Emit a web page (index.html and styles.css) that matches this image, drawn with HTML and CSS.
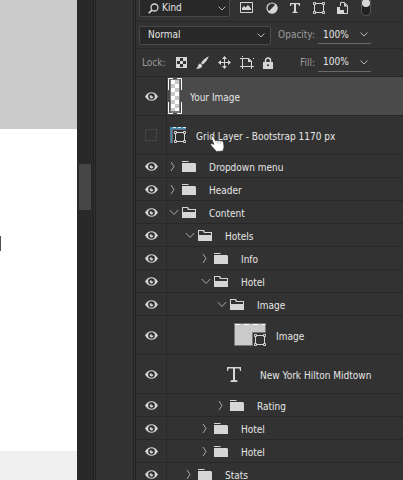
FILE: index.html
```html
<!DOCTYPE html>
<html lang="en">
<head>
<meta charset="utf-8">
<title>Layers</title>
<link rel="stylesheet" href="styles.css">
</head>
<body>
<svg class="defs" aria-hidden="true">
  <symbol id="eye" viewBox="0 0 13 9"><path d="M0 4.500C3-1.200 10-1.200 13 4.500 10 10.200 3 10.200 0 4.500Z" fill="#d6d6d6"/><circle cx="6.500" cy="4.500" r="3.300" fill="#303030"/><circle cx="6.500" cy="4.700" r="1.800" fill="#d6d6d6"/><circle cx="7.300" cy="3.700" r=".9" fill="#303030"/></symbol>
  <symbol id="closed" viewBox="0 0 10 11"><path d="M2 1l3 4.500L2 10" fill="none" stroke="#a8a8a8"/></symbol>
  <symbol id="opened" viewBox="0 0 10 11"><path d="M.8 3l4.200 4.500L9.200 3" fill="none" stroke="#a8a8a8"/></symbol>
  <symbol id="folder" viewBox="0 0 14 11"><path d="M0 0h6l1 1H0zM0 2h13l1 1v8H0z" fill="#d6d6d6"/></symbol>
  <symbol id="folder-open" viewBox="0 0 14 11"><path d="M0 0h6l1 2h7v9H0zM1 1v4h12V3H6L5 1z" fill="#d6d6d6" fill-rule="evenodd"/></symbol>
  <symbol id="chevron" viewBox="0 0 8 5"><path d="M.5.500L4 4 7.500.500" fill="none" stroke="#b4b4b4"/></symbol>
  <symbol id="shape" viewBox="0 0 12 12"><path d="M1.500 3v6M10.500 3v6M3 1.500h6M3 10.500h6" stroke="#d6d6d6"/><path d="M.5.500h2v2h-2zM9.500.500h2v2h-2zM.5 9.500h2v2h-2zM9.500 9.500h2v2h-2z" fill="#303030" stroke="#d6d6d6"/></symbol>
</svg>
<div class="app">
  <section class="canvas" aria-label="Document">
    <div class="hero"></div>
    <div class="page"><i class="mark"></i></div>
    <div class="foot"></div>
  </section>
  <div class="track"><div class="thumb"></div></div>
  <div class="dock"></div>
  <main class="panel">
    <div class="bar filters">
      <div class="picker kind">
        <svg class="search" width="11" height="11" viewBox="0 0 11 11"><circle cx="6.500" cy="4.500" r="3.500" fill="none" stroke="#d6d6d6" stroke-width="1.300"/><path d="M4 7L.8 10.200" stroke="#d6d6d6" stroke-width="1.700"/></svg>
        <select aria-label="Filter type"><option>Kind</option></select>
        <svg class="chev" width="8" height="5"><use href="#chevron"/></svg>
      </div>
      <div class="types">
        <button aria-label="Pixel layers"><svg width="13" height="11" viewBox="0 0 13 11"><path d="M.5.500h12v10H.5z" fill="none" stroke="#d6d6d6"/><path d="M2 8V6l2-2 1.500 1.500L8 3l3 3.500V8z" fill="#d6d6d6"/></svg></button>
        <button aria-label="Adjustment layers"><svg width="12" height="12" viewBox="0 0 12 12"><circle cx="6" cy="6" r="5" fill="none" stroke="#d6d6d6" stroke-width="1.200"/><path d="M9.900 2.100A5.500 5.500 0 0 1 2.100 9.900z" fill="#d6d6d6"/></svg></button>
        <button aria-label="Type layers"><svg width="10" height="10" viewBox="0 0 10 10"><path d="M0 0h10v3H9L8.500 1.300H6V8.500L7.500 9v1h-5V9L4 8.500V1.300H1.500L1 3H0z" fill="#d6d6d6"/></svg></button>
        <button aria-label="Shape layers"><svg width="12" height="12"><use href="#shape"/></svg></button>
        <button aria-label="Smart objects"><svg width="11" height="12" viewBox="0 0 11 12"><path d="M3.500 4V.5h4l3 3v8H7" fill="none" stroke="#d6d6d6"/><path d="M7 .5v4h3.500zM0 5h3v3h4v4H0z" fill="#d6d6d6"/></svg></button>
        <button class="toggle" aria-label="Toggle filtering"><span></span></button>
      </div>
    </div>
    <div class="bar">
      <div class="picker mode">
        <select aria-label="Blend mode"><option>Normal</option></select>
        <svg class="chev" width="8" height="5"><use href="#chevron"/></svg>
      </div>
      <label class="amount">Opacity: <span class="field"><input value="100%"><svg width="8" height="5"><use href="#chevron"/></svg></span></label>
    </div>
    <div class="bar">
      <span class="caption">Lock:</span>
      <div class="locks">
        <button aria-label="Lock transparent pixels"><svg width="11" height="11" viewBox="0 0 11 11"><path d="M0 0h11v11H0z" fill="#d6d6d6"/><path d="M4 1h3v3H4zM1 4h3v3H1zM7 4h3v3H7zM4 7h3v3H4z" fill="#303030"/></svg></button>
        <button aria-label="Lock image pixels"><svg width="13" height="13" viewBox="0 0 13 13"><path d="M12.800.200C10 1.200 6.500 4.500 5 7l1.800 1.500C9.500 6.500 12 3 12.800.200zM4.300 7.500C2.500 7.500 2.300 9 2 10.200 1.700 11.200 1 12 0 12.500c2.500.700 5.500 0 6.200-2.500L6 9z" fill="#d6d6d6"/></svg></button>
        <button aria-label="Lock position"><svg width="13" height="13" viewBox="0 0 13 13"><path d="M6.500 1v11M1 6.500h11" stroke="#d6d6d6"/><path d="M6.500 0L9 3H4zM6.500 13L9 10H4zM0 6.500L3 4v5zM13 6.500L10 4v5z" fill="#d6d6d6"/></svg></button>
        <button aria-label="Lock artboard nesting"><svg width="14" height="13" viewBox="0 0 14 13"><path d="M2.500 0v1M2.500 2v11M0 2.500h9l2.500 2.500V10M0 10.500h14M11.500 10v3M13 2.500h1" fill="none" stroke="#d6d6d6"/><path d="M8 2v4h4z" fill="#d6d6d6"/></svg></button>
        <button aria-label="Lock all"><svg width="10" height="12" viewBox="0 0 10 12"><path d="M2.500 5.500V3.500a2.500 2.500 0 0 1 5 0v2" fill="none" stroke="#d6d6d6" stroke-width="1.500"/><path d="M0 5h10v7H0z" fill="#d6d6d6"/><circle cx="5" cy="8.300" r="1" fill="#303030"/></svg></button>
      </div>
      <label class="amount">Fill: <span class="field"><input value="100%"><svg width="8" height="5"><use href="#chevron"/></svg></span></label>
    </div>
    <ul class="layers">
      <li class="tall active"><button class="vis" aria-label="Hide layer"><svg width="13" height="9"><use href="#eye"/></svg></button><div class="item art">
        <svg width="14" height="36" viewBox="0 0 14 36"><defs><pattern id="check" width="8" height="8" patternUnits="userSpaceOnUse" x="3" y="2"><path d="M0 0h8v8H0z" fill="#fff"/><path d="M4 0h4v4H4zM0 4h4v4H0z" fill="#c8c8c8"/></pattern></defs><path d="M2 1h10v34H2z" fill="#777"/><path d="M3 2h8v31H3z" fill="url(#check)"/><path d="M5 .5H.5V12M9 .5h4.500V12M.5 24v11.500H5M13.500 24v11.500H9" fill="none" stroke="#fff"/></svg>
        <span class="title">Your Image</span></div></li>
      <li class="tall"><button class="vis" aria-label="Show layer"><span class="off"></span></button><div class="item grid">
        <svg width="16" height="16" viewBox="0 0 16 16"><path d="M0 0h16v4H4v12H0z" fill="#6a6e72"/><path d="M0 1h16" stroke="#3f8dbb" stroke-width="2"/><path d="M3 .5h3M8 .5h3M13 .5h3" stroke="#e4eef4"/><path d="M1.500 2v14" stroke="#3f8dbb"/><path d="M3 3h13v13H3z" fill="#303030"/><svg x="4" y="4" width="12" height="12"><use href="#shape"/></svg></svg>
        <span class="title">Grid Layer - Bootstrap 1170 px</span>
        <svg class="cursor" width="15" height="17" viewBox="0 0 15 17"><path d="M1 1.800C1.800.800 3 1 3.600 2.200L5.600 6 7 5.200l1.300.8L9.700 5.300l1.300.9 1.400-.5c1 1 1.600 4 1.500 6.800l-1 3.500-6.500.5L2 11.500.5 9.500 2 8.500l2 1z" fill="#fff" stroke="#333" stroke-width=".6"/><path d="M7 6.500l1 2M9.500 6.500l1 2" stroke="#777" stroke-width=".6"/></svg></div></li>
      <li><button class="vis" aria-label="Hide layer"><svg width="13" height="9"><use href="#eye"/></svg></button><div class="item"><button class="twist" aria-label="Expand"><svg width="10" height="11"><use href="#closed"/></svg></button><svg width="14" height="11"><use href="#folder"/></svg><span class="name">Dropdown menu</span></div></li>
      <li><button class="vis" aria-label="Hide layer"><svg width="13" height="9"><use href="#eye"/></svg></button><div class="item"><button class="twist" aria-label="Expand"><svg width="10" height="11"><use href="#closed"/></svg></button><svg width="14" height="11"><use href="#folder"/></svg><span class="name">Header</span></div></li>
      <li><button class="vis" aria-label="Hide layer"><svg width="13" height="9"><use href="#eye"/></svg></button><div class="item"><button class="twist" aria-label="Collapse"><svg width="10" height="11"><use href="#opened"/></svg></button><svg width="14" height="11"><use href="#folder-open"/></svg><span class="name">Content</span></div></li>
      <li><button class="vis" aria-label="Hide layer"><svg width="13" height="9"><use href="#eye"/></svg></button><div class="item l1"><button class="twist" aria-label="Collapse"><svg width="10" height="11"><use href="#opened"/></svg></button><svg width="14" height="11"><use href="#folder-open"/></svg><span class="name">Hotels</span></div></li>
      <li><button class="vis" aria-label="Hide layer"><svg width="13" height="9"><use href="#eye"/></svg></button><div class="item l2"><button class="twist" aria-label="Expand"><svg width="10" height="11"><use href="#closed"/></svg></button><svg width="14" height="11"><use href="#folder"/></svg><span class="name">Info</span></div></li>
      <li><button class="vis" aria-label="Hide layer"><svg width="13" height="9"><use href="#eye"/></svg></button><div class="item l2"><button class="twist" aria-label="Collapse"><svg width="10" height="11"><use href="#opened"/></svg></button><svg width="14" height="11"><use href="#folder-open"/></svg><span class="name">Hotel</span></div></li>
      <li><button class="vis" aria-label="Hide layer"><svg width="13" height="9"><use href="#eye"/></svg></button><div class="item l3"><button class="twist" aria-label="Collapse"><svg width="10" height="11"><use href="#opened"/></svg></button><svg width="14" height="11"><use href="#folder-open"/></svg><span class="name">Image</span></div></li>
      <li class="tall"><button class="vis" aria-label="Hide layer"><svg width="13" height="9"><use href="#eye"/></svg></button><div class="item picture">
        <svg width="32" height="24" viewBox="0 0 32 24"><path d="M.5.500h31v9H18.500v13H.5z" fill="#cacaca" stroke="#777"/><path d="M1 1.500h30" stroke="#fff" stroke-dasharray="5 4"/><svg x="20" y="11" width="12" height="12"><use href="#shape"/></svg></svg>
        <span class="title">Image</span></div></li>
      <li class="tall"><button class="vis" aria-label="Hide layer"><svg width="13" height="9"><use href="#eye"/></svg></button><div class="item type">
        <svg width="14" height="15" viewBox="0 0 14 15"><path d="M0 0h14v4h-1l-.5-2.500H8V13l2.500.500V15h-7v-1.500L6 13V1.500H1.500L1 4H0z" fill="#d6d6d6"/></svg>
        <span class="title">New York Hilton Midtown</span></div></li>
      <li><button class="vis" aria-label="Hide layer"><svg width="13" height="9"><use href="#eye"/></svg></button><div class="item l3"><button class="twist" aria-label="Expand"><svg width="10" height="11"><use href="#closed"/></svg></button><svg width="14" height="11"><use href="#folder"/></svg><span class="name">Rating</span></div></li>
      <li><button class="vis" aria-label="Hide layer"><svg width="13" height="9"><use href="#eye"/></svg></button><div class="item l2"><button class="twist" aria-label="Expand"><svg width="10" height="11"><use href="#closed"/></svg></button><svg width="14" height="11"><use href="#folder"/></svg><span class="name">Hotel</span></div></li>
      <li><button class="vis" aria-label="Hide layer"><svg width="13" height="9"><use href="#eye"/></svg></button><div class="item l2"><button class="twist" aria-label="Expand"><svg width="10" height="11"><use href="#closed"/></svg></button><svg width="14" height="11"><use href="#folder"/></svg><span class="name">Hotel</span></div></li>
      <li><button class="vis" aria-label="Hide layer"><svg width="13" height="9"><use href="#eye"/></svg></button><div class="item l1"><button class="twist" aria-label="Expand"><svg width="10" height="11"><use href="#closed"/></svg></button><svg width="14" height="11"><use href="#folder"/></svg><span class="name">Stats</span></div></li>
    </ul>
  </main>
</div>
</body>
</html>
```
FILE: styles.css
```css
* { box-sizing: border-box; }
body {
  margin: 0;
  background: #323232;
  color: #e6e6e6;
  font: 10px/14px "DejaVu Sans Condensed", "DejaVu Sans", sans-serif;
}
svg { display: block; flex: none; }
.defs { position: absolute; width: 0; height: 0; }
button, select, input {
  appearance: none;
  margin: 0;
  padding: 0;
  border: 0;
  background: none;
  color: inherit;
  font: inherit;
}
button { display: flex; align-items: center; justify-content: center; }

.app { display: flex; height: 100vh; overflow: hidden; }
.canvas { width: 77px; flex: none; display: flex; flex-direction: column; background: #fff; }
.hero { height: 129px; background: #cbcbcb; }
.page { flex: 1; padding-top: 107px; }
.mark { display: block; width: 1px; height: 15px; background: #505050; }
.foot { height: 29px; background: #f0f0f0; }
.track { width: 16px; flex: none; padding: 164px 2px 0; background: #292929; }
.thumb { height: 46px; background: #464646; }
.dock {
  width: 43px;
  flex: none;
  background: #323232;
  border: double #222;
  border-width: 0 3px;
}

.panel { flex: 1; min-width: 0; }
.bar {
  display: flex;
  align-items: center;
  height: 27px;
  padding: 0 32px 0 3px;
  border-bottom: 1px solid #282828;
}
.bar:nth-child(3) { height: 28px; padding-left: 6px; }
.filters { height: 22px; align-items: flex-start; }
.picker {
  display: flex;
  align-items: center;
  height: 19px;
  padding: 0 5px 0 8px;
  background: #282828;
  border: 1px solid #4a4a4a;
  border-radius: 2px;
}
.picker select { flex: 1; min-width: 0; height: 14px; }
.kind { width: 91px; height: 17px; border-top: 0; border-radius: 0 0 2px 2px; padding-right: 3px; gap: 3px; }
.mode { width: 132px; }
.types { display: flex; flex: 1; justify-content: space-between; align-items: center; height: 15px; margin-left: 10px; }
.toggle { width: 10px; height: 17px; align-items: flex-start; background: #222; border: 1px solid #555; border-top: 0; border-radius: 0 0 5px 5px; }
.toggle span { width: 8px; height: 8px; flex: none; border-radius: 4px; background: #d6d6d6; }
.amount { display: flex; align-items: center; margin-left: auto; color: #9b9b9b; gap: 3px; }
.field { display: flex; align-items: center; width: 53px; height: 18px; padding: 0 3px 0 5px; border-bottom: 1px solid #6a6a6a; color: #e6e6e6; }
.field input { flex: 1; min-width: 0; }
.caption { width: 34px; color: #9b9b9b; }
.locks { display: flex; align-items: center; gap: 9px; }

.layers { margin: 0; padding: 0; list-style: none; }
.layers li { display: flex; height: 23px; border-bottom: 1px solid #282828; }
.layers .tall { height: 39px; }
.vis { width: 31px; flex: none; border-right: 1px solid #282828; }
.off { width: 12px; height: 12px; border: 1px solid #454545; }
.item { position: relative; display: flex; align-items: center; flex: 1; min-width: 0; padding-left: 2px; white-space: nowrap; }
.active .item { background: #4a4a4a; }
.twist { width: 10px; margin-right: 3px; }
.name { margin-left: 13px; padding-top: 3px; }
.title { padding-top: 3px; }
.l1 { padding-left: 18px; }
.l2 { padding-left: 34px; }
.l3 { padding-left: 50px; }
.art { padding-left: 1px; gap: 8px; }
.grid { padding-left: 3px; gap: 10px; }
.picture { padding-left: 67px; gap: 10px; }
.type { padding-left: 60px; gap: 19px; }
.cursor { position: absolute; left: 43px; top: 19px; }
```
